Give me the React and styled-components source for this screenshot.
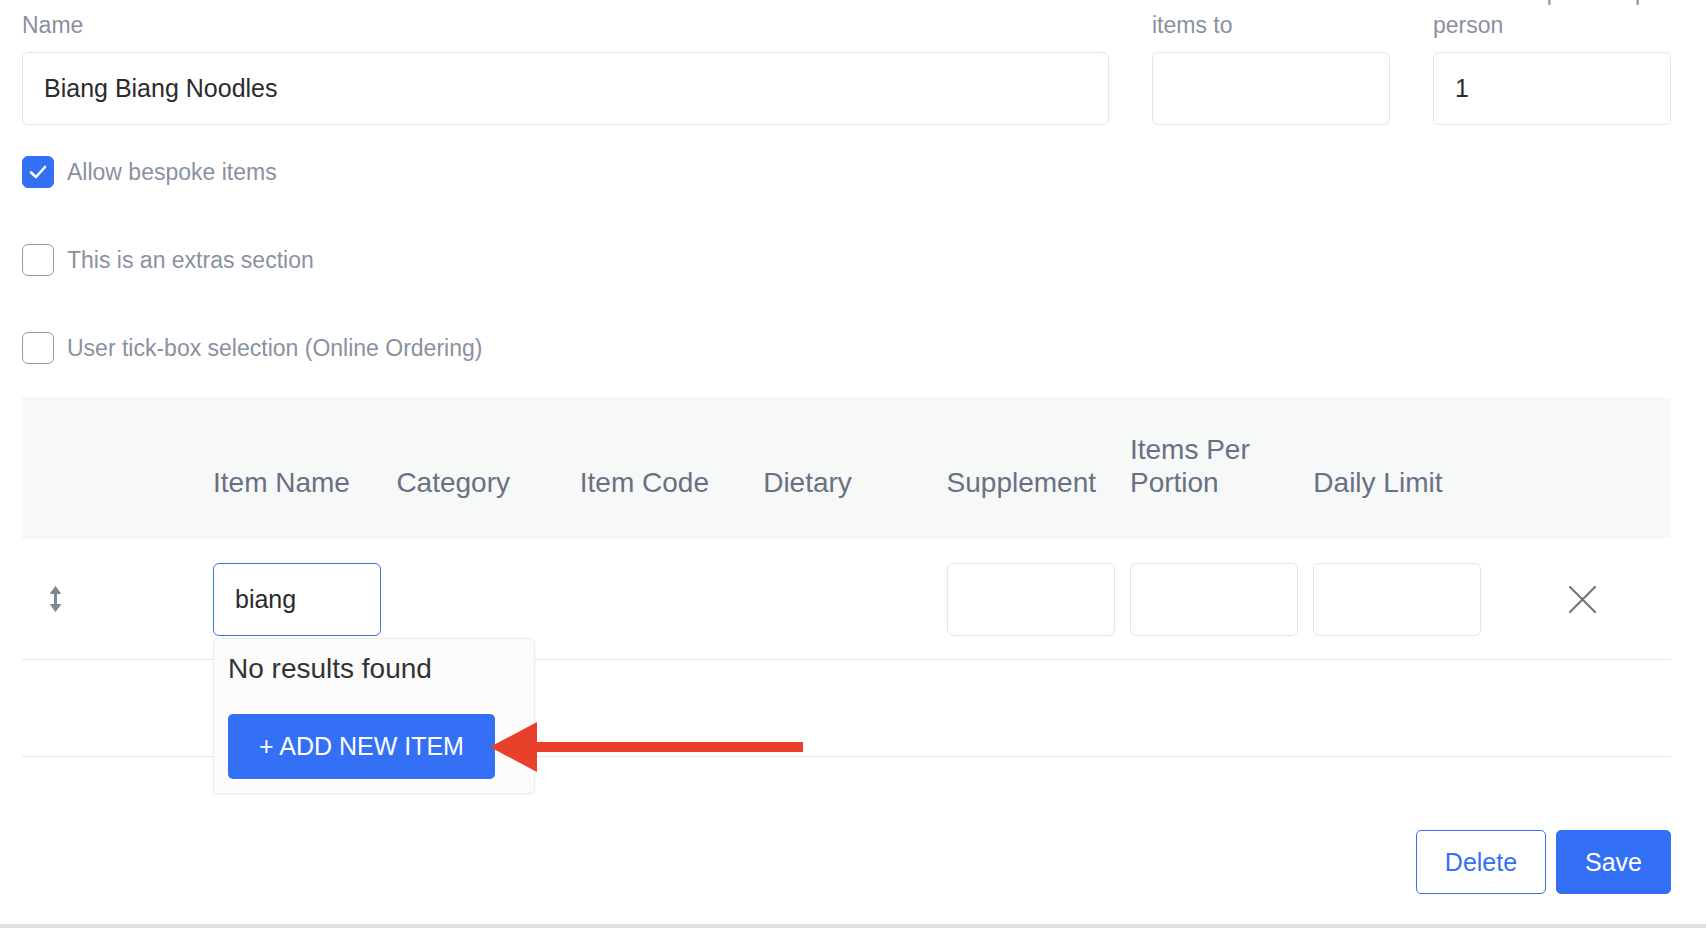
import React from 'react';
import styled, { createGlobalStyle } from 'styled-components';

const blue = '#3370f5';
const labelGrey = '#89919f';
const headGrey = '#687184';
const lineGrey = '#e8e8e8';

const GlobalStyle = createGlobalStyle`
  html, body {
    margin: 0;
    padding: 0;
    background: #fff;
    overflow: hidden;
  }
  body {
    font-family: "Liberation Sans", Arial, Helvetica, sans-serif;
  }
  * { box-sizing: border-box; }
`;

const Page = styled.div`
  height: 928px;
  padding: 0 35px 0 22px;
  border-bottom: 4px solid #e2e2e2;
  overflow: hidden;
`;

const FieldRow = styled.div`
  display: flex;
  align-items: flex-end;
  gap: 43px;
  margin-top: -24px;
`;

const Field = styled.div`
  display: flex;
  flex-direction: column;
  flex: ${p => (p.$grow ? '1' : '0 0 238px')};
`;

const Label = styled.label`
  font-size: 23px;
  line-height: 33px;
  color: ${labelGrey};
  margin-bottom: 10px;
`;

const TextInput = styled.input`
  height: 73px;
  width: 100%;
  border: 1px solid ${p => (p.$focused ? '#3b74f0' : '#e6e6e6')};
  border-radius: 6px;
  padding: 0 21px;
  font-family: inherit;
  font-size: 25px;
  color: #2b2b2b;
  background: #fff;
  outline: none;
`;

const CheckList = styled.div`
  display: flex;
  flex-direction: column;
  gap: 56px;
  margin-top: 31px;
`;

const CheckRow = styled.div`
  display: flex;
  align-items: center;
  gap: 13px;
  font-size: 23px;
  color: ${labelGrey};
`;

const Box = styled.span`
  width: 32px;
  height: 32px;
  border-radius: 6px;
  display: flex;
  align-items: center;
  justify-content: center;
  background: ${p => (p.$checked ? blue : '#fff')};
  border: 1px solid ${p => (p.$checked ? blue : '#9a9a9a')};
`;

const Table = styled.div`
  margin-top: 33px;
`;

const cols = '191px repeat(7, 183.4px) 1fr';

const HeadRow = styled.div`
  display: grid;
  grid-template-columns: ${cols};
  align-items: end;
  height: 142px;
  padding-bottom: 40px;
  background: #f7f8f8;
  font-size: 28px;
  line-height: 33px;
  color: ${headGrey};
`;

const HeadCell = styled.div`
  max-width: 150px;
`;

const Row = styled.div`
  display: grid;
  grid-template-columns: ${cols};
  align-items: center;
  height: ${p => p.$h}px;
  border-bottom: 1px solid ${lineGrey};
`;

const DragCell = styled.div`
  padding-left: 28px;
  display: flex;
`;

const SmallInput = styled(TextInput)`
  width: 168px;
`;

const NameCell = styled.div`
  position: relative;
`;

const Dropdown = styled.div`
  position: absolute;
  top: calc(100% + 2px);
  left: 0;
  width: 322px;
  height: 156px;
  padding: 13px 14px 0;
  background: #fcfcfc;
  border: 1px solid #ececec;
  border-radius: 5px;
  box-shadow: 0 1px 3px rgba(0, 0, 0, 0.04);
  z-index: 5;
`;

const NoResults = styled.div`
  font-size: 28px;
  line-height: 34px;
  color: #333;
`;

const AddButton = styled.button`
  margin-top: 28px;
  width: 267px;
  height: 65px;
  border: 0;
  border-radius: 5px;
  background: ${blue};
  color: #fff;
  font-family: inherit;
  font-size: 25px;
`;

const Pointer = styled.svg`
  position: absolute;
  left: 276px;
  top: 83px;
  overflow: visible;
`;

const RemoveCell = styled.div`
  padding-left: 72px;
  display: flex;
`;

const Footer = styled.div`
  display: flex;
  justify-content: flex-end;
  gap: 10px;
  margin-top: 73px;
`;

const Btn = styled.button`
  height: 64px;
  width: ${p => p.$w}px;
  border-radius: 5px;
  border: 1.5px solid ${blue};
  background: ${p => (p.$primary ? blue : '#fff')};
  color: ${p => (p.$primary ? '#fff' : blue)};
  font-family: inherit;
  font-size: 25px;
`;

const Check = () => (
  <svg width="20" height="16" viewBox="0 0 20 16">
    <path d="M3 8.5 L8 13 L17 3" fill="none" stroke="#fff" strokeWidth="2.6" strokeLinecap="round" strokeLinejoin="round" />
  </svg>
);

const DragHandle = () => (
  <svg width="11" height="26" viewBox="0 0 11 26">
    <path d="M5.5 0.5 L10.5 7.5 L0.5 7.5 Z M5.5 25.5 L10.5 18.5 L0.5 18.5 Z" fill="#7f8896" strokeLinejoin="round" stroke="#7f8896" strokeWidth="1" />
    <rect x="4" y="5" width="3" height="16" fill="#7f8896" />
  </svg>
);

const Cross = () => (
  <svg width="27" height="27" viewBox="0 0 27 27">
    <path d="M1 1 L26 26 M26 1 L1 26" stroke="#767676" strokeWidth="2.2" strokeLinecap="round" />
  </svg>
);

const checks = [
  { label: 'Allow bespoke items', checked: true },
  { label: 'This is an extras section', checked: false },
  { label: 'User tick-box selection (Online Ordering)', checked: false },
];

const headers = ['', 'Item Name', 'Category', 'Item Code', 'Dietary', 'Supplement', 'Items Per Portion', 'Daily Limit', ''];

const App = () => (
  <Page>
    <GlobalStyle />
    <FieldRow>
      <Field $grow>
        <Label>Name</Label>
        <TextInput defaultValue="Biang Biang Noodles" />
      </Field>
      <Field>
        <Label>Restrict selection of items to</Label>
        <TextInput />
      </Field>
      <Field>
        <Label>Number of portions per person</Label>
        <TextInput defaultValue="1" />
      </Field>
    </FieldRow>

    <CheckList>
      {checks.map(c => (
        <CheckRow key={c.label}>
          <Box $checked={c.checked}>{c.checked && <Check />}</Box>
          {c.label}
        </CheckRow>
      ))}
    </CheckList>

    <Table>
      <HeadRow>
        {headers.map((h, i) => (
          <HeadCell key={i}>{h}</HeadCell>
        ))}
      </HeadRow>
      <Row $h={121}>
        <DragCell><DragHandle /></DragCell>
        <NameCell>
          <SmallInput $focused defaultValue="biang" />
          <Dropdown>
            <NoResults>No results found</NoResults>
            <AddButton>+ ADD NEW ITEM</AddButton>
            <Pointer width="313" height="50" viewBox="0 0 313 50">
              <path d="M0 25 L47 0 L47 50 Z" fill="#e8402a" />
              <rect x="46" y="20" width="267" height="10" fill="#e8402a" />
            </Pointer>
          </Dropdown>
        </NameCell>
        <div />
        <div />
        <div />
        <div><SmallInput /></div>
        <div><SmallInput /></div>
        <div><SmallInput /></div>
        <RemoveCell><Cross /></RemoveCell>
      </Row>
      <Row $h={97} />
    </Table>

    <Footer>
      <Btn $w={130}>Delete</Btn>
      <Btn $w={115} $primary>Save</Btn>
    </Footer>
  </Page>
);

export default App;
